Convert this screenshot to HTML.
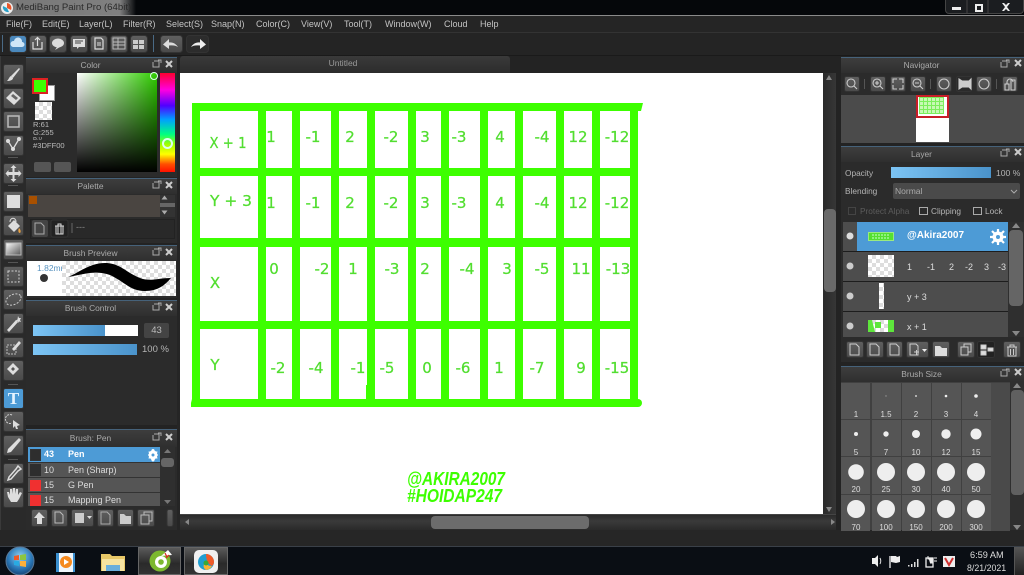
<!DOCTYPE html>
<html><head><meta charset="utf-8"><title>MediBang Paint Pro</title>
<style>
html,body{margin:0;padding:0;width:1024px;height:575px;overflow:hidden;background:#252525}
body{position:relative;font-family:"Liberation Sans",sans-serif;color:#bbb;filter:blur(.35px)}
div,span{position:absolute;box-sizing:border-box;white-space:nowrap}
svg{position:absolute;left:0;top:0}
.m{top:18px;font-size:9px;line-height:13px;color:#c4c4c4}
.hd{height:16px;background:linear-gradient(#3d3d3d,#2f2f2f);border-top:1px solid #46627a;font-size:8.4px;line-height:15px;text-align:center;color:#aaa}
.p{background:#2b2b2b}
.ck{background-color:#fff;background-image:linear-gradient(45deg,#ddd 25%,transparent 25%,transparent 75%,#ddd 75%),linear-gradient(45deg,#ddd 25%,transparent 25%,transparent 75%,#ddd 75%);background-size:8px 8px;background-position:0 0,4px 4px}
.bar{background:linear-gradient(90deg,#7cc4f4,#4a93cb);}
.t{font-size:8.3px;line-height:12px;color:#b5b5b5}
.r{left:28px;width:132px;height:14px;background:#555;border-bottom:1px solid #333;font-size:9px;line-height:14px;color:#ddd}
.l{left:843px;width:165px;background:#4d4d4d;border-bottom:1px solid #1d1d1d;height:30px}
.w{font-size:9px;line-height:12px;color:#ddd}
</style></head><body>

<!-- title bar -->
<div style="left:0;top:0;width:1024px;height:15px;background:#05070a"></div>
<div style="left:0;top:0;width:136px;height:15px;background:linear-gradient(90deg,#777 0,#808080 88%,#05070a 100%)"></div>
<div style="left:16px;top:1px;font-size:9.6px;line-height:14px;color:#2a2a2a">MediBang Paint Pro (64bit)</div>
<div style="left:0;top:15px;width:1024px;height:1px;background:#8a8a8a"></div>
<div style="left:945px;top:0;width:79px;height:14px;background:#1b1d20;border:1px solid #444;border-top:0;border-radius:0 0 4px 4px"></div>

<!-- menu -->
<div style="left:0;top:16px;width:1024px;height:17px;background:#252525"></div>
<span class="m" style="left:6px">File(F)</span><span class="m" style="left:42px">Edit(E)</span><span class="m" style="left:79px">Layer(L)</span><span class="m" style="left:123px">Filter(R)</span><span class="m" style="left:166px">Select(S)</span><span class="m" style="left:211px">Snap(N)</span><span class="m" style="left:256px">Color(C)</span><span class="m" style="left:301px">View(V)</span><span class="m" style="left:344px">Tool(T)</span><span class="m" style="left:385px">Window(W)</span><span class="m" style="left:444px">Cloud</span><span class="m" style="left:480px">Help</span>
<div style="left:0;top:32px;width:1024px;height:1px;background:#333"></div>
<div style="left:0;top:33px;width:1024px;height:23px;background:#242424"></div>
<div style="left:0;top:55px;width:1024px;height:1px;background:#1a1a1a"></div>

<!-- left strip + panel column -->
<div style="left:0;top:56px;width:26px;height:474px;background:#2a2a2a;border-left:1px solid #3a3a3a"></div>
<div style="left:26px;top:56px;width:151px;height:474px;background:#232323"></div>

<!-- Color -->
<div class="p" style="left:26px;top:57px;width:151px;height:120px"></div>
<div class="hd" style="left:26px;top:57px;width:151px;padding-right:22px">Color</div>
<div style="left:77px;top:73px;width:80px;height:99px;background:linear-gradient(transparent,#000),linear-gradient(90deg,#fff,#2fcc00)"></div>
<div style="left:150px;top:72px;width:8px;height:8px;border:1.5px solid #dfe;border-radius:50%"></div>
<div style="left:160px;top:73px;width:15px;height:99px;background:linear-gradient(#ff0030 0,#ff00e0 17%,#5000ff 33%,#00a0ff 47%,#00ff80 62%,#a0ff00 72%,#ffff00 82%,#ff5000 92%,#ff1000 100%)"></div>
<div style="left:162px;top:138px;width:11px;height:11px;border:2px solid #dfe;border-radius:50%"></div>
<div style="left:39px;top:85px;width:16px;height:16px;background:#fff;border:1px solid #999"></div>
<div style="left:32px;top:78px;width:16px;height:16px;background:#3dff00;border:2px solid #d22"></div>
<div class="ck" style="left:35px;top:102px;width:17px;height:18px"></div>
<div style="left:33px;top:121px;font-size:7.6px;line-height:8.2px;color:#bbb;height:32px;overflow:hidden;width:42px">R:61<br>G:255<br><span style="position:static;display:block;height:5px;overflow:hidden;font-size:6px;line-height:5px">B:0</span>#3DFF00</div>
<div style="left:34px;top:162px;width:17px;height:10px;background:#555;border-radius:2px"></div>
<div style="left:54px;top:162px;width:17px;height:10px;background:#555;border-radius:2px"></div>

<!-- Palette -->
<div class="p" style="left:26px;top:178px;width:151px;height:65px"></div>
<div class="hd" style="left:26px;top:178px;width:151px;padding-right:22px">Palette</div>
<div style="left:28px;top:195px;width:132px;height:22px;background:#4a4541"></div>
<div style="left:29px;top:196px;width:8px;height:8px;background:#a85000"></div>
<div style="left:160px;top:195px;width:15px;height:22px;background:#333"></div>
<div style="left:30px;top:219px;width:145px;height:20px;border:1px solid #222;background:#292929"></div>
<span style="left:76px;top:222px;font-size:9px;color:#888">---</span>

<!-- Brush Preview -->
<div class="p" style="left:26px;top:245px;width:151px;height:53px"></div>
<div class="hd" style="left:26px;top:245px;width:151px;padding-right:22px">Brush Preview</div>
<div class="ck" style="left:62px;top:261px;width:114px;height:35px"></div>
<div style="left:27px;top:261px;width:35px;height:35px;background:#fff;overflow:hidden"><span style="left:10px;top:2px;font-size:8.5px;color:#5a94c0">1.82mm</span></div>

<!-- Brush Control -->
<div class="p" style="left:26px;top:300px;width:151px;height:125px"></div>
<div class="hd" style="left:26px;top:300px;width:151px;padding-right:22px">Brush Control</div>
<div style="left:33px;top:325px;width:105px;height:11px;background:#fff"></div>
<div class="bar" style="left:33px;top:325px;width:72px;height:11px"></div>
<div style="left:144px;top:323px;width:25px;height:15px;background:#444;border-radius:2px;font-size:9.5px;line-height:15px;text-align:center;color:#bbb">43</div>
<div class="bar" style="left:33px;top:344px;width:104px;height:11px"></div>
<span class="t" style="left:142px;top:344px;font-size:9.5px">100 %</span>

<!-- Brush: Pen -->
<div class="p" style="left:26px;top:429px;width:151px;height:101px"></div>
<div class="hd" style="left:26px;top:429px;width:151px;height:18px;line-height:16px;padding-right:22px">Brush: Pen</div>
<div class="r" style="top:447px;height:16px;background:#4d9bd6;color:#fff;font-weight:bold;line-height:15px"><span style="left:16px">43</span><span style="left:40px">Pen</span></div>
<div class="r" style="top:463px;height:15px"><span style="left:16px">10</span><span style="left:40px">Pen (Sharp)</span></div>
<div class="r" style="top:478px;height:15px"><span style="left:16px">15</span><span style="left:40px">G Pen</span></div>
<div class="r" style="top:493px;height:13px;border:0;overflow:hidden"><span style="left:16px">15</span><span style="left:40px">Mapping Pen</span></div>
<div style="left:30px;top:449px;width:11px;height:12px;background:#2e2e2e;border:1px solid #333"></div>
<div style="left:30px;top:464px;width:11px;height:12px;background:#2e2e2e"></div>
<div style="left:30px;top:480px;width:11px;height:11px;background:#f03030"></div>
<div style="left:30px;top:495px;width:11px;height:11px;background:#f03030"></div>
<div style="left:160px;top:447px;width:15px;height:59px;background:#2f2f2f"></div>
<div style="left:161px;top:458px;width:13px;height:9px;background:#666;border-radius:3px"></div>

<!-- Tab bar + canvas -->
<div style="left:177px;top:56px;width:659px;height:17px;background:#232323"></div>
<div style="left:180px;top:56px;width:330px;height:17px;background:linear-gradient(#3a3a3a,#2c2c2c);border-radius:3px 3px 0 0;font-size:8.5px;line-height:15px;text-align:center;color:#999;padding-right:4px">Untitled</div>
<div style="left:180px;top:73px;width:643px;height:441px;background:#fff"></div>
<div style="left:823px;top:73px;width:13px;height:441px;background:linear-gradient(90deg,#2a2a2a,#363636)"></div>
<div style="left:824px;top:209px;width:12px;height:83px;background:#6a6a6a;border-radius:4px"></div>
<div style="left:180px;top:514px;width:656px;height:16px;background:linear-gradient(#2a2a2a,#3a3a3a 40%,#2a2a2a);border-top:1px solid #444"></div>
<div style="left:431px;top:516px;width:158px;height:13px;background:#6c6c6c;border-radius:4px"></div>

<!-- Right column -->
<div style="left:836px;top:56px;width:188px;height:474px;background:#232323"></div>
<div class="p" style="left:841px;top:57px;width:183px;height:86px"></div>
<div class="hd" style="left:841px;top:57px;width:183px;padding-right:22px">Navigator</div>
<div style="left:841px;top:95px;width:183px;height:48px;background:#4b4b4b"></div>
<div style="left:916px;top:95px;width:33px;height:47px;background:#fff"></div>
<div style="left:916px;top:95px;width:33px;height:23px;border:2px solid #c81e28;background:#fff"></div>
<div style="left:919px;top:97px;width:25px;height:17px;background-color:#c8f9b4;background-image:linear-gradient(90deg,#7cee5c 1px,transparent 1px),linear-gradient(#7cee5c 1px,transparent 1px);background-size:4px 4px"></div>

<!-- Layer -->
<div class="p" style="left:841px;top:146px;width:183px;height:216px"></div>
<div class="hd" style="left:841px;top:146px;width:183px;padding-right:22px">Layer</div>
<span class="t" style="left:845px;top:167px">Opacity</span>
<div class="bar" style="left:891px;top:167px;width:100px;height:11px"></div>
<span class="t" style="left:996px;top:167px;font-size:8.6px">100 %</span>
<span class="t" style="left:845px;top:185px">Blending</span>
<div style="left:893px;top:183px;width:127px;height:16px;background:#4a4a4a;border-radius:2px;font-size:8.5px;line-height:16px;padding-left:2px;color:#aaa">Normal</div>
<div style="left:848px;top:207px;width:8px;height:8px;border:1px solid #444"></div>
<span class="t" style="left:860px;top:205px;color:#5c5c5c">Protect Alpha</span>
<div style="left:919px;top:207px;width:9px;height:8px;border:1px solid #aaa"></div>
<span class="t" style="left:931px;top:205px">Clipping</span>
<div style="left:973px;top:207px;width:9px;height:8px;border:1px solid #aaa"></div>
<span class="t" style="left:985px;top:205px">Lock</span>

<div class="l" style="top:222px;height:30px;background:#4d9bd6"><div style="left:0;top:0;width:14px;height:29px;background:#4d4d4d"></div><span style="left:64px;top:8px;font-size:10px;font-weight:bold;color:#fff">@Akira2007</span></div>
<div class="l" style="top:252px"><span class="w" style="left:64px;top:9px">1</span><span class="w" style="left:84px;top:9px">-1</span><span class="w" style="left:106px;top:9px">2</span><span class="w" style="left:122px;top:9px">-2</span><span class="w" style="left:141px;top:9px">3</span><span class="w" style="left:155px;top:9px">-3</span></div>
<div class="l" style="top:282px"><span class="w" style="left:64px;top:9px">y + 3</span></div>
<div class="l" style="top:312px;height:25px;border:0"><span class="w" style="left:64px;top:9px">x + 1</span></div>
<div style="left:868px;top:232px;width:26px;height:9px;background:#9aea80"></div>
<div class="ck" style="left:868px;top:255px;width:26px;height:22px"></div>
<div class="ck" style="left:879px;top:283px;width:5px;height:26px"></div>
<div class="ck" style="left:868px;top:320px;width:26px;height:12px"></div>
<div style="left:1008px;top:222px;width:16px;height:115px;background:#2f2f2f"></div>
<div style="left:1009px;top:230px;width:14px;height:76px;background:#656565;border-radius:4px"></div>

<!-- Brush size -->
<div class="p" style="left:841px;top:366px;width:183px;height:164px"></div>
<div class="hd" style="left:841px;top:366px;width:183px;padding-right:22px">Brush Size</div>
<div style="left:841px;top:382px;width:169px;height:149px;background:#404040"></div>
<div style="left:1010px;top:382px;width:14px;height:149px;background:#2f2f2f"></div>
<div style="left:1011px;top:390px;width:13px;height:105px;background:#606060;border-radius:4px"></div>

<!-- bottom strip & taskbar -->
<div style="left:0;top:530px;width:1024px;height:16px;background:#262626"></div>
<div style="left:0;top:546px;width:1024px;height:29px;background:#0a0e14;border-top:1px solid #3a4048"></div>
<div style="left:138px;top:547px;width:43px;height:28px;background:linear-gradient(#5a5a5a,#2a2a2a 60%,#333);border:1px solid #666"></div>
<div style="left:184px;top:547px;width:44px;height:28px;background:linear-gradient(#5a5a5a,#2a2a2a 60%,#333);border:1px solid #666"></div>
<div style="left:1014px;top:547px;width:10px;height:28px;background:linear-gradient(#555,#222);border-left:1px solid #555"></div>
<span style="left:970px;top:549px;font-size:9.2px;line-height:12px;color:#ddd">6:59 AM</span>
<span style="left:967px;top:562px;font-size:8.8px;line-height:12px;color:#ddd">8/21/2021</span>

<svg width="1024" height="575" viewBox="0 0 1024 575" xmlns="http://www.w3.org/2000/svg">
<defs>
<linearGradient id="b" x1="0" y1="0" x2="0" y2="1"><stop offset="0" stop-color="#606060"/><stop offset="1" stop-color="#4a4a4a"/></linearGradient>
<radialGradient id="orb" cx=".5" cy=".35" r=".7"><stop offset="0" stop-color="#8fd0f0"/><stop offset=".6" stop-color="#2a78b8"/><stop offset="1" stop-color="#123a68"/></radialGradient>
<linearGradient id="g" x1="0" y1="0" x2="1" y2="1"><stop offset="0" stop-color="#fff"/><stop offset="1" stop-color="#555"/></linearGradient>
</defs>

<!-- green table -->
<g fill="#3dff00">
<path d="M192 103H643L641 111H638V407H191V403L192 399Z"/>
<circle cx="638" cy="403" r="4"/>
</g>
<g fill="#fff">
<rect x="200" y="111" width="58" height="57"/><rect x="266" y="111" width="26" height="57"/><rect x="300" y="111" width="31" height="57"/><rect x="339" y="111" width="28" height="57"/><rect x="375" y="111" width="33" height="57"/><rect x="416" y="111" width="25" height="57"/><rect x="449" y="111" width="31" height="57"/><rect x="488" y="111" width="27" height="57"/><rect x="523" y="111" width="33" height="57"/><rect x="564" y="111" width="28" height="57"/><rect x="600" y="111" width="30" height="57"/>
<rect x="200" y="176" width="58" height="62"/><rect x="266" y="176" width="26" height="62"/><rect x="300" y="176" width="31" height="62"/><rect x="339" y="176" width="28" height="62"/><rect x="375" y="176" width="33" height="62"/><rect x="416" y="176" width="25" height="62"/><rect x="449" y="176" width="31" height="62"/><rect x="488" y="176" width="27" height="62"/><rect x="523" y="176" width="33" height="62"/><rect x="564" y="176" width="28" height="62"/><rect x="600" y="176" width="30" height="62"/>
<rect x="200" y="247" width="58" height="74"/><rect x="266" y="247" width="26" height="74"/><rect x="300" y="247" width="31" height="74"/><rect x="339" y="247" width="28" height="74"/><rect x="375" y="247" width="33" height="74"/><rect x="416" y="247" width="25" height="74"/><rect x="449" y="247" width="31" height="74"/><rect x="488" y="247" width="27" height="74"/><rect x="523" y="247" width="33" height="74"/><rect x="564" y="247" width="28" height="74"/><rect x="600" y="247" width="30" height="74"/>
<rect x="200" y="329" width="58" height="70"/><rect x="266" y="329" width="26" height="70"/><rect x="300" y="329" width="31" height="70"/><rect x="339" y="329" width="28" height="70"/><rect x="375" y="329" width="33" height="70"/><rect x="416" y="329" width="25" height="70"/><rect x="449" y="329" width="31" height="70"/><rect x="488" y="329" width="27" height="70"/><rect x="523" y="329" width="33" height="70"/><rect x="564" y="329" width="28" height="70"/><rect x="600" y="329" width="30" height="70"/>
</g>
<rect x="366" y="385" width="8" height="16" fill="#3dff00"/>

<g font-family="'DejaVu Sans',sans-serif" font-size="15" fill="#52de30" stroke="#52de30" stroke-width=".25" text-anchor="middle">
<text x="228" y="148" textLength="37" lengthAdjust="spacingAndGlyphs">X + 1</text>
<text x="231" y="206" textLength="42" lengthAdjust="spacingAndGlyphs">Y + 3</text>
<text x="215" y="288">X</text><text x="215" y="370">Y</text>
<text x="271" y="142">1</text><text x="313" y="142">-1</text><text x="350" y="142">2</text><text x="391" y="142">-2</text><text x="425" y="142">3</text><text x="459" y="142">-3</text><text x="500" y="142">4</text><text x="542" y="142">-4</text><text x="578" y="142">12</text><text x="617" y="142">-12</text>
<text x="271" y="208">1</text><text x="313" y="208">-1</text><text x="350" y="208">2</text><text x="391" y="208">-2</text><text x="425" y="208">3</text><text x="459" y="208">-3</text><text x="500" y="208">4</text><text x="542" y="208">-4</text><text x="578" y="208">12</text><text x="617" y="208">-12</text>
<text x="274" y="274">0</text><text x="322" y="274">-2</text><text x="353" y="274">1</text><text x="392" y="274">-3</text><text x="425" y="274">2</text><text x="467" y="274">-4</text><text x="507" y="274">3</text><text x="542" y="274">-5</text><text x="581" y="274">11</text><text x="618" y="274">-13</text>
<text x="278" y="373">-2</text><text x="316" y="373">-4</text><text x="358" y="373">-1</text><text x="387" y="373">-5</text><text x="427" y="373">0</text><text x="463" y="373">-6</text><text x="499" y="373">1</text><text x="537" y="373">-7</text><text x="581" y="373">9</text><text x="617" y="373">-15</text>
</g>
<g font-family="'Liberation Sans',sans-serif" font-weight="bold" font-style="italic" font-size="18" fill="#3dff00">
<text x="407" y="485" textLength="98" lengthAdjust="spacingAndGlyphs">@AKIRA2007</text>
<text x="407" y="502" textLength="95" lengthAdjust="spacingAndGlyphs">#HOIDAP247</text>
</g>

<!-- window controls -->
<g fill="#eee">
<rect x="952" y="7" width="9" height="3"/>
<path d="M975 4h8v8h-8zM977 6v4h4v-4z" fill-rule="evenodd"/>
<path d="M1002 3l2 0 2 2 2-2 2 0-3 4 3 4-2 0-2-2-2 2-2 0 3-4z"/>
</g>
<path d="M967 0v14M988 0v14" stroke="#444"/>
<!-- app icon -->
<circle cx="7" cy="8" r="6" fill="#eee"/><path d="M7 3a5 5 0 0 1 4 7l-4-2z" fill="#e8552a"/><path d="M3 6a5 5 0 0 0 6 6l-2-4z" fill="#2aa0c8"/>

<!-- top toolbar -->
<g fill="url(#b)" stroke="#333">
<rect x="9.500" y="35.500" width="17" height="17" rx="3" fill="#4a88bc"/>
<rect x="29.500" y="35.500" width="17" height="17" rx="3"/><rect x="49.500" y="35.500" width="17" height="17" rx="3"/><rect x="70.500" y="35.500" width="17" height="17" rx="3"/><rect x="90.500" y="35.500" width="17" height="17" rx="3"/><rect x="110.500" y="35.500" width="17" height="17" rx="3"/><rect x="130.500" y="35.500" width="17" height="17" rx="3"/>
<rect x="160.500" y="35.500" width="22" height="17" rx="3"/><rect x="186.500" y="35.500" width="22" height="17" fill="#2c2c2c" rx="3"/>
</g>
<path d="M2.500 35v17M153.500 35v17" stroke="#4a6a85"/>
<path d="M13 47a3 3 0 0 1 1-6 4 4 0 0 1 8 1 2.500 2.500 0 0 1 0 5z" fill="#cfe6f7"/>
<path d="M33 42v7h9v-7M37.500 46v-8M35 40l2.500-2.500L40 40" fill="none" stroke="#ddd" stroke-width="1.200"/>
<ellipse cx="58" cy="43" rx="6" ry="4.500" fill="#ddd"/><path d="M57 47l-2 3 5-3z" fill="#ddd"/>
<path d="M73 39h12v8h-6l-2 2v-2h-4z" fill="#ddd"/><path d="M75 41h8M75 43h6" stroke="#444"/>
<path d="M95 38h6l2 2v9h-8z" fill="none" stroke="#ddd" stroke-width="1.200"/><path d="M97 43h4M97 45h4" stroke="#ddd"/>
<path d="M113 38h12v11h-12zM113 42h12M113 45h12M118 38v11" fill="none" stroke="#bbb"/>
<path d="M133 40h5v4h-5zM139 40h5v4h-5zM133 45h5v4h-5zM139 45h5v4h-5z" fill="#ccc"/>
<path d="M178 47c-2-3-5-5-9-4.500V39l-6 5.500 6 4.500v-3.500c4-.5 7 0 9 1.500z" fill="#ddd"/>
<path d="M191 47c2-3 5-5 9-4.500V39l6 5.500-6 4.500v-3.500c-4-.5-7 0-9 1.500z" fill="#eee"/>

<!-- left tools -->
<g fill="url(#b)" stroke="#333">
<rect x="3.500" y="64.500" width="20" height="20" rx="2"/><rect x="3.500" y="88.500" width="20" height="20" rx="2"/><rect x="3.500" y="111.500" width="20" height="20" rx="2"/><rect x="3.500" y="135.500" width="20" height="20" rx="2"/><rect x="3.500" y="163.500" width="20" height="20" rx="2"/><rect x="3.500" y="191.500" width="20" height="20" rx="2"/><rect x="3.500" y="215.500" width="20" height="20" rx="2"/><rect x="3.500" y="239.500" width="20" height="20" rx="2"/><rect x="3.500" y="266.500" width="20" height="20" rx="2"/><rect x="3.500" y="289.500" width="20" height="20" rx="2"/><rect x="3.500" y="313.500" width="20" height="20" rx="2"/><rect x="3.500" y="337.500" width="20" height="20" rx="2"/><rect x="3.500" y="360.500" width="20" height="20" rx="2"/>
<rect x="3.500" y="388.500" width="20" height="20" rx="2" fill="#4d9bd6"/>
<rect x="3.500" y="411.500" width="20" height="20" rx="2"/><rect x="3.500" y="435.500" width="20" height="20" rx="2"/><rect x="3.500" y="463.500" width="20" height="20" rx="2"/><rect x="3.500" y="487.500" width="20" height="20" rx="2"/>
</g>
<path d="M8 157.500h10M8 185.500h10M8 262.500h10M8 384.500h10M8 459.500h10" stroke="#555"/>
<path d="M19 68L11 76l2 2 7-9z" fill="#ddd"/><path d="M7 81c3 0 6-1 6-3l-2-2c-2 1-2 3-4 5z" fill="#ddd"/>
<path d="M13 91l8 7-7 7-8-7z" fill="#ddd"/><path d="M13 94l5 4-2 2-5-4z" fill="#666"/>
<rect x="8" y="116" width="11" height="11" fill="none" stroke="#bbb" stroke-width="1.500"/>
<path d="M8 141l5 8 6-10" fill="none" stroke="#ddd" stroke-width="1.300"/><circle cx="8" cy="141" r="2" fill="#ddd"/><circle cx="13" cy="149" r="2" fill="#ddd"/><circle cx="19" cy="139" r="2" fill="#ddd"/>
<path d="M13.500 165l3 3h-2v4h4v-2l3 3.500-3 3.500v-2h-4v4h2l-3 3-3-3h2v-4h-4v2l-3-3.500 3-3.500v2h4v-4h-2z" fill="#ddd"/>
<rect x="7" y="195" width="13" height="13" fill="#ddd"/>
<path d="M8 226l6-6 6 6-6 6z" fill="#ddd"/><path d="M10 222c0-5 6-5 6 0" fill="none" stroke="#ddd"/><path d="M19 228c2 2 2 4 1 5-2 0-2-3-1-5z" fill="#e8a040"/>
<rect x="6" y="243" width="15" height="12" fill="url(#g)" stroke="#bbb"/>
<rect x="8" y="271" width="11" height="11" fill="none" stroke="#ccc" stroke-dasharray="2 1.500"/>
<ellipse cx="13.500" cy="299.500" rx="8" ry="5" transform="rotate(-25 13.500 299.500)" fill="none" stroke="#ccc" stroke-dasharray="2 1.500"/>
<path d="M7 330l9-10 2 2-9 10z" fill="#ddd"/><path d="M18 316l1 2 2 0-1 2 1 2-2-.5-1 1.500-.5-2-2-.5 2-1z" fill="#ddd"/>
<rect x="7" y="345" width="9" height="9" fill="none" stroke="#bbb" stroke-dasharray="2 1"/><path d="M12 349l7-8 2 2-7 8z" fill="#ddd"/>
<path d="M13 363l6 6-6 6-6-6z" fill="#ddd"/><path d="M13 367l2 2-2 2-2-2z" fill="#555"/>
<text x="13.500" y="404" text-anchor="middle" font-family="'Liberation Serif',serif" font-weight="bold" font-size="17" fill="#e8f4ff">T</text>
<path d="M12 415a4.500 4.500 0 1 0 0 8" fill="none" stroke="#ccc" stroke-dasharray="2 1"/><path d="M13 420l7 5-3 1 1 3-2 0-1-3-2 2z" fill="#ddd"/>
<path d="M19 438l2 2-10 12-4 1 1-4z" fill="#ddd"/>
<path d="M18 466l3 3-3 2-7 8-3 1 1-3 7-8z" fill="none" stroke="#ddd" stroke-width="1.500"/>
<path d="M8 497l-1-5 2 0 1 3 0-6 2 0 0 5 1-6 2 0 0 6 1-5 2 0 0 6 2-3 2 1-3 6-2 3h-6z" fill="#ddd"/>

<!-- panel dock/close icons -->
<g fill="none" stroke="#aaa">
<path d="M154 61h5v6h-6v-5M158 60h3v3"/><path d="M154 182h5v6h-6v-5M158 181h3v3"/><path d="M154 249h5v6h-6v-5M158 248h3v3"/><path d="M154 304h5v6h-6v-5M158 303h3v3"/><path d="M154 434h5v6h-6v-5M158 433h3v3"/>
<path d="M1002 61h5v6h-6v-5M1006 60h3v3"/><path d="M1002 150h5v6h-6v-5M1006 149h3v3"/><path d="M1002 370h5v6h-6v-5M1006 369h3v3"/>
</g>
<g stroke="#ccc" stroke-width="2">
<path d="M166 61l6 6m0-6l-6 6M166 182l6 6m0-6l-6 6M166 249l6 6m0-6l-6 6M166 304l6 6m0-6l-6 6M166 434l6 6m0-6l-6 6"/>
<path d="M1015 60l6 6m0-6l-6 6M1015 149l6 6m0-6l-6 6M1015 369l6 6m0-6l-6 6"/>
</g>

<!-- palette toolbar -->
<path d="M161 199l6-0 -3 -4zM161 210h6l-3 4z" fill="#aaa" transform="translate(.5 .5)"/><rect x="160" y="203" width="15" height="4" fill="#666"/>
<rect x="32" y="220" width="16" height="17" rx="2" fill="#444"/><rect x="51" y="220" width="17" height="17" rx="2" fill="#222" stroke="#333"/>
<path d="M35 223h6l3 3v8h-9z" fill="none" stroke="#aaa"/><path d="M55 226h9M56 226v8h7v-8M58 226v8M61 226v8M58 226v-2h3v2" fill="none" stroke="#ddd"/>
<path d="M72 223v10" stroke="#666"/>

<!-- brush preview stroke -->
<circle cx="44" cy="278" r="4" fill="#333"/>
<path d="M68 277C80 272 90 263 105 263C120 263 125 272 140 278C150 282 158 278 171 278C165 285 158 291 145 291C130 291 125 282 110 275C95 270 85 274 68 277Z" fill="#000"/>

<!-- brush list icons -->
<path d="M151.500 450.500a1 1 0 0 1 3 0l1.500 1 1.500 0-.5 2 1 1.500-1 1.500.5 2-2 0-1 1.500a1 1 0 0 1-3 0l-1-1.500-2 0 .5-2-1-1.500 1-1.500-.5-2 1.500 0z" fill="#fff"/><circle cx="153" cy="455" r="1.500" fill="#4d9bd6"/>
<path d="M164 453h7l-3.500-4zM164 500h7l-3.500 4z" fill="#777"/>
<g fill="url(#b)" stroke="#333">
<rect x="31.500" y="509.500" width="16" height="17" rx="2"/><rect x="51.500" y="509.500" width="16" height="17" rx="2"/><rect x="71.500" y="509.500" width="22" height="17" rx="2"/><rect x="97.500" y="509.500" width="16" height="17" rx="2"/><rect x="117.500" y="509.500" width="16" height="17" rx="2"/><rect x="137.500" y="509.500" width="17" height="17" rx="2"/><rect x="167" y="509.500" width="6" height="17" rx="2"/>
</g>
<path d="M39 512l6 6h-3v6h-5v-6h-3z" fill="#ddd"/>
<path d="M55 512h5l3 3v8h-8z" fill="none" stroke="#bbb"/>
<path d="M75 513h9v10h-9z" fill="#ccc"/><path d="M87 516h5l-2.500 3z" fill="#ddd"/>
<path d="M101 512h6l3 3v9h-9z" fill="none" stroke="#aaa"/>
<path d="M120 514h4l2 2h5v8h-11z" fill="#ccc"/>
<path d="M141 515h8v9h-8zM144 515v-3h8v9h-3" fill="none" stroke="#bbb"/>

<!-- navigator toolbar -->
<g fill="url(#b)" stroke="#333">
<rect x="844.500" y="76.500" width="15" height="15" rx="2"/><rect x="870.500" y="76.500" width="15" height="15" rx="2"/><rect x="890.500" y="76.500" width="15" height="15" rx="2"/><rect x="910.500" y="76.500" width="15" height="15" rx="2"/><rect x="936.500" y="76.500" width="15" height="15" rx="2"/><rect x="956.500" y="76.500" width="15" height="15" fill="#2a2a2a" rx="2"/><rect x="976.500" y="76.500" width="15" height="15" rx="2"/><rect x="1002.500" y="76.500" width="15" height="15" rx="2"/>
</g>
<g fill="none" stroke="#ccc" stroke-width="1.100">
<circle cx="851" cy="83" r="4"/><path d="M854 86l3 3"/><circle cx="877" cy="83" r="4"/><path d="M880 86l3 3M875 83h4M877 81v4"/>
<path d="M893 83v-4h4M899 79h4v4M903 85v4h-4M897 89h-4v-4"/>
<circle cx="917" cy="83" r="4"/><path d="M920 86l3 3M915 83h4"/>
<circle cx="944" cy="84" r="5"/><circle cx="984" cy="84" r="5"/>
<path d="M959 79l3 2h7l2-2v10l-2-2h-7l-3 2z" fill="#ccc"/>
<path d="M1005 84h4v6h-4zM1011 80v10h4v-10zM1007 84v-2a3 3 0 0 1 6 0"/>
</g>
<path d="M864.500 79v10M930.500 79v10M996.500 79v10" stroke="#555"/>

<!-- layer panel icons -->
<path d="M1011 190l3 3 3-3" stroke="#aaa" fill="none"/>
<circle cx="850" cy="236" r="3.500" fill="#ddd"/><circle cx="850" cy="266" r="3.500" fill="#ccc"/><circle cx="850" cy="296" r="3.500" fill="#ccc"/><circle cx="850" cy="326" r="3.500" fill="#ccc"/>
<rect x="869" y="233" width="24" height="7" fill="#55e030"/>
<path d="M872 235h18M872 238h18" stroke="#cfc" stroke-dasharray="2 1"/>
<path d="M868 320h4l3 12h-7zM875 322h6v6h-6zM888 320h6v12h-6z" fill="#5ee63c"/>
<circle cx="998" cy="237" r="5.500" fill="#fff"/><path d="M998 229v16M990 237h16M992 231l12 12M1004 231l-12 12" stroke="#fff" stroke-width="2.200"/><circle cx="998" cy="237" r="2" fill="#4d9bd6"/>
<path d="M1012 228h8l-4-5zM1012 331h8l-4 5z" fill="#888"/>
<g fill="url(#b)" stroke="#333">
<rect x="846.500" y="341.500" width="17" height="16" rx="2"/><rect x="866.500" y="341.500" width="17" height="16" rx="2"/><rect x="886.500" y="341.500" width="16" height="16" rx="2"/><rect x="906.500" y="341.500" width="22" height="16" rx="2"/><rect x="932.500" y="341.500" width="17" height="16" rx="2"/><rect x="957.500" y="341.500" width="17" height="16" rx="2"/><rect x="977.500" y="341.500" width="17" height="16" fill="#222" rx="2"/><rect x="1003.500" y="341.500" width="17" height="16" rx="2"/>
</g>
<g fill="none" stroke="#ccc">
<path d="M850 344h6l3 3v8h-9zM870 344h6l3 3v8h-9zM890 344h6l3 3v8h-9z"/>
<path d="M910 344h6l2 2v9h-8zM914 352h5M916.500 350v5"/>
<path d="M961 347h7v8h-7zM964 347v-3h7v8h-3"/>
<path d="M981 345h5v4h-5zM981 351h5v4h-5z" fill="#ddd"/><path d="M988 348h5v3h-5z" fill="#ddd"/>
<path d="M1007 347h10M1008 347v9h8v-9M1010 347v-2h4v2M1010.500 349v6M1013.500 349v6"/>
</g>
<path d="M935 346h5l2 2h5v8h-12z" fill="#ddd"/><path d="M922 349h5l-2.500 3z" fill="#eee"/>

<!-- brush size grid -->
<g fill="#555">
<rect x="841" y="383" width="29" height="36"/><rect x="872" y="383" width="29" height="36"/><rect x="902" y="383" width="29" height="36"/><rect x="932" y="383" width="29" height="36"/><rect x="962" y="383" width="29" height="36"/>
<rect x="841" y="420" width="29" height="36"/><rect x="872" y="420" width="29" height="36"/><rect x="902" y="420" width="29" height="36"/><rect x="932" y="420" width="29" height="36"/><rect x="962" y="420" width="29" height="36"/>
<rect x="841" y="457" width="29" height="37"/><rect x="872" y="457" width="29" height="37"/><rect x="902" y="457" width="29" height="37"/><rect x="932" y="457" width="29" height="37"/><rect x="962" y="457" width="29" height="37"/>
<rect x="841" y="495" width="29" height="36"/><rect x="872" y="495" width="29" height="36"/><rect x="902" y="495" width="29" height="36"/><rect x="932" y="495" width="29" height="36"/><rect x="962" y="495" width="29" height="36"/>
</g>
<rect x="991" y="383" width="19" height="148" fill="#4a4a4a"/>
<g fill="#eee">
<circle cx="886" cy="396" r=".7" fill="#999"/><circle cx="916" cy="396" r="1" fill="#ccc"/><circle cx="946" cy="396" r="1.300"/><circle cx="976" cy="396" r="1.800"/>
<circle cx="856" cy="434" r="2"/><circle cx="886" cy="434" r="2.700"/><circle cx="916" cy="434" r="4"/><circle cx="946" cy="434" r="4.700"/><circle cx="976" cy="434" r="5.500"/>
<circle cx="856" cy="472" r="7.800"/><circle cx="886" cy="472" r="9"/><circle cx="916" cy="472" r="9"/><circle cx="946" cy="472" r="9"/><circle cx="976" cy="472" r="9"/>
<circle cx="856" cy="509" r="9"/><circle cx="886" cy="509" r="9"/><circle cx="916" cy="509" r="9"/><circle cx="946" cy="509" r="9"/><circle cx="976" cy="509" r="9"/>
</g>
<g font-family="'Liberation Sans',sans-serif" font-size="8" fill="#ddd" text-anchor="middle">
<text x="856" y="417">1</text><text x="886" y="417">1.5</text><text x="916" y="417">2</text><text x="946" y="417">3</text><text x="976" y="417">4</text>
<text x="856" y="455">5</text><text x="886" y="455">7</text><text x="916" y="455">10</text><text x="946" y="455">12</text><text x="976" y="455">15</text>
<text x="856" y="492">20</text><text x="886" y="492">25</text><text x="916" y="492">30</text><text x="946" y="492">40</text><text x="976" y="492">50</text>
<text x="856" y="530">70</text><text x="886" y="530">100</text><text x="916" y="530">150</text><text x="946" y="530">200</text><text x="976" y="530">300</text>
</g>
<path d="M1013 388h8l-4-5zM1013 525h8l-4 5z" fill="#888"/>

<!-- scrollbar arrows -->
<path d="M826 80h6l-3-5zM826 507h6l-3 5zM831 519v6l4-3zM189 519v6l-4-3z" fill="#888"/>

<!-- taskbar icons -->
<circle cx="20" cy="561" r="14" fill="url(#orb)" stroke="#5a7a9a"/>
<path d="M14 556l5-1v5h-5z" fill="#f05a28"/><path d="M20 555l6-1v6h-6z" fill="#8cc63f"/><path d="M14 561h5v5l-5-1z" fill="#29abe2"/><path d="M20 561h6v6l-6-1z" fill="#fbb03b"/>
<rect x="56" y="553" width="19" height="19" fill="#3a8fd0"/><rect x="59" y="553" width="14" height="19" fill="#f0f6fb"/><circle cx="66" cy="562" r="6" fill="#f58a1f"/><path d="M64 559l5 3-5 3z" fill="#fff"/>
<path d="M101 554h9l2 2h13v15h-24z" fill="#e8c868"/><rect x="102" y="559" width="22" height="12" fill="#f7e3a0"/><path d="M106 565h14v6h-14z" fill="#6aaedc"/>
<circle cx="160" cy="561" r="10.500" fill="#7cb82f"/><circle cx="161" cy="562" r="6" fill="#fff"/><circle cx="161" cy="562" r="2.800" fill="#7cb82f"/><path d="M161 556l7-6 4 5z" fill="#fff"/><path d="M165 553l2 4M169 555l-3 3" stroke="#d22" stroke-width="1.200"/>
<rect x="194" y="550" width="24" height="23" rx="5" fill="#f0f0f0"/><circle cx="206" cy="562" r="8" fill="#1f9ed1"/><path d="M206 554a8 8 0 0 1 8 8c0 2-1 3-2 4-3-1-6-5-6-12z" fill="#ef5a28"/><path d="M206 570a8 8 0 0 0 6-4c-3 0-5-1-7-3-2 2-2 5 1 7z" fill="#f9b233"/><circle cx="206" cy="563" r="2.500" fill="#3aaa35"/>
<path d="M872 558h3l3-3v12l-3-3h-3z" fill="#eee"/><path d="M880 558c1 2 1 4 0 6" fill="none" stroke="#ddd"/>
<path d="M890 556v12" stroke="#eee" stroke-width="1.300"/><path d="M891 556h5l1 1 3-1v6l-4 1-5-1z" fill="#eee"/>
<path d="M908 565h1.500v1.500H908zM911 564h1.500v3H911zM914 562h1.500v5H914zM917 559h1.500v8H917z" fill="#ddd"/>
<rect x="926" y="558" width="7" height="9" fill="none" stroke="#eee" stroke-width="1.300"/><path d="M928 556v3h5v4h-3" fill="#eee" stroke="#eee"/><path d="M934 558h3M934 561h3" stroke="#eee"/>
<rect x="943" y="556" width="12" height="11" fill="#eee"/><path d="M945 558l4 7 4-7" fill="none" stroke="#d03030" stroke-width="2"/>
</svg>
</body></html>
